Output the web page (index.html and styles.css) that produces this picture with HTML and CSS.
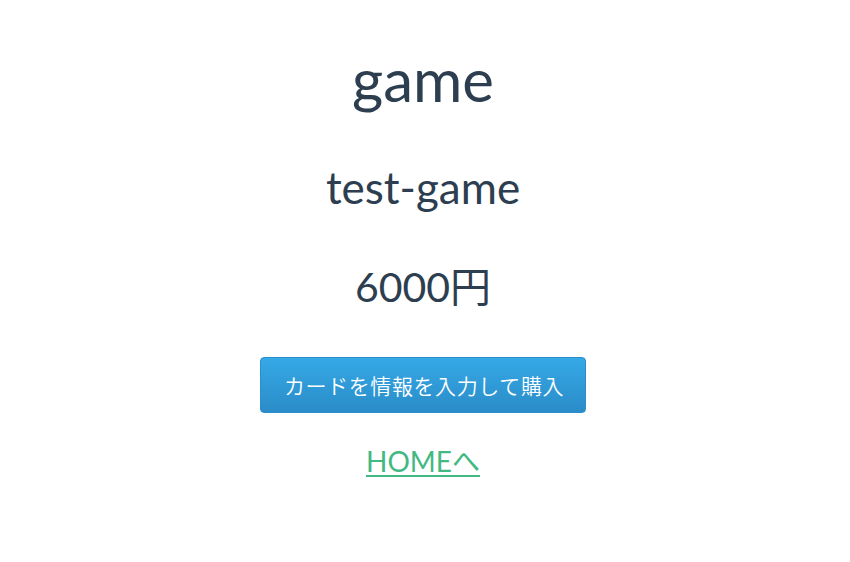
FILE: index.html
```html
<!DOCTYPE html>
<html lang="ja">
<head>
<meta charset="utf-8">
<title>game</title>
<link rel="stylesheet" href="styles.css">
</head>
<body>
<main class="page">
  <h1 class="title">game</h1>
  <h2 class="name">test-game</h2>
  <p class="price">6000円</p>
  <button class="buy" type="button">カードを情報を入力して購入</button>
  <a class="home" href="#">HOMEへ</a>
</main>
</body>
</html>
```
FILE: styles.css
```css
html, body {
  margin: 0;
  padding: 0;
  background: #ffffff;
}

.page {
  display: flex;
  flex-direction: column;
  align-items: center;
  padding: 43px 4px 0 0;
  font-family: "Lato", "Noto Sans CJK JP", sans-serif;
  color: #2c3e50;
  -webkit-font-smoothing: antialiased;
}

.title {
  margin: 0;
  font-size: 60px;
  font-weight: 400;
  line-height: 1.2;
}

.name {
  margin: 46px 0 0;
  font-size: 44px;
  font-weight: 400;
  line-height: 1.2;
}

.price {
  margin: 48px 0 0;
  font-size: 41px;
  font-weight: 400;
  line-height: 1.2;
}

.buy {
  margin-top: 46px;
  box-sizing: border-box;
  height: 56px;
  width: 326px;
  padding: 0 0 0 2px;
  border: 1px solid #2a8dcc;
  border-radius: 4px;
  background: linear-gradient(to bottom, #35a9e6 0%, #2a8cc8 100%);
  color: #ffffff;
  font-family: "Noto Sans CJK JP", sans-serif;
  font-size: 21px;
  font-weight: 350;
  letter-spacing: 0.6px;
  cursor: pointer;
}

.home {
  margin-top: 32px;
  font-size: 28px;
  line-height: 1.2;
  color: #42b983;
  text-decoration: underline;
  text-decoration-thickness: 2px;
  text-underline-offset: 3px;
}
```
